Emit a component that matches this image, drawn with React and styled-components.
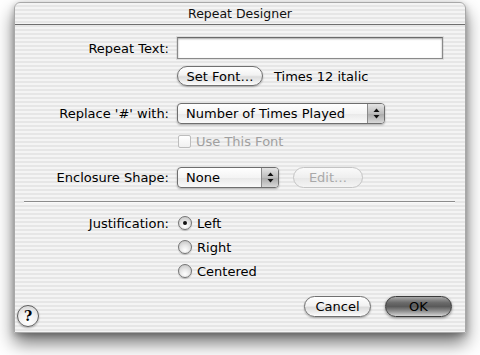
import styled, { createGlobalStyle } from "styled-components";

const GlobalStyle = createGlobalStyle`
    html, body {
        margin: 0;
        padding: 0;
        background: #ffffff;
    }
    body {
        font-family: "DejaVu Sans", "Liberation Sans", sans-serif;
        font-size: 13px;
        color: #000;
    }
`;

const pinstripe = `repeating-linear-gradient(to bottom, #f4f4f4 0px, #f4f4f4 2px, #e6e6e6 2px, #e6e6e6 4px)`;

const Page = styled.div`
    width: 480px;
    height: 355px;
    padding: 2px 0 0 14px;
    box-sizing: border-box;
    overflow: hidden;
`;

const Window = styled.div`
    width: 452px;
    height: 331px;
    box-sizing: border-box;
    display: flex;
    flex-direction: column;
    background: ${pinstripe};
    border: 1px solid #a8a8a8;
    border-radius: 6px 6px 0 0;
    box-shadow: 0 10px 18px rgba(0, 0, 0, 0.55), 0 2px 6px rgba(0, 0, 0, 0.25);
`;

const TitleBar = styled.div`
    height: 21px;
    flex: none;
    display: flex;
    align-items: center;
    justify-content: center;
    border-bottom: 1px solid #6e6e6e;
    font-size: 12.5px;
    color: #111;
`;

const Content = styled.div`
    flex: 1;
    display: flex;
    flex-direction: column;
`;

const Row = styled.div`
    display: grid;
    grid-template-columns: 154px 1fr;
    column-gap: 8px;
    align-items: center;
    height: ${(p) => p.h}px;
    margin-top: ${(p) => p.mt}px;
`;

const Label = styled.span`
    text-align: right;
    white-space: nowrap;
`;

const Controls = styled.div`
    display: flex;
    align-items: center;
    gap: ${(p) => p.gap || 0}px;
`;

const TextField = styled.div`
    width: 266px;
    height: 22px;
    box-sizing: border-box;
    background: #fff;
    border: 1px solid #8a8a8a;
    border-top-color: #6a6a6a;
    box-shadow: inset 0 1px 2px rgba(0, 0, 0, 0.35), 0 0 0 1px rgba(0, 0, 0, 0.08);
`;

const PushButton = styled.button`
    height: ${(p) => p.h || 20}px;
    width: ${(p) => p.w}px;
    box-sizing: border-box;
    padding: 0;
    border-radius: 11px;
    font-family: inherit;
    font-size: 13px;
    color: ${(p) => (p.disabled ? "#a9a9a9" : "#000")};
    border: 1px solid ${(p) => (p.disabled ? "#c4c4c4" : "#707070")};
    background: ${(p) =>
        p.disabled
            ? "linear-gradient(to bottom, #fafafa, #efefef 50%, #e6e6e6 51%, #f4f4f4)"
            : "linear-gradient(to bottom, #ffffff, #f2f2f2 45%, #dcdcdc 55%, #f4f4f4 90%, #ffffff)"};
    box-shadow: ${(p) => (p.disabled ? "none" : "0 1px 2px rgba(0,0,0,0.3)")};
`;

const DefaultButton = styled(PushButton)`
    border-color: #3a3a3a;
    background: linear-gradient(to bottom, #a8a8a8 0%, #6a6a6a 30%, #5a5a5a 50%, #8a8a8a 72%, #d4d4d4 100%);
    color: #000;
    box-shadow: 0 1px 3px rgba(0, 0, 0, 0.45);
`;

const InfoText = styled.span`
    margin-left: 11px;
`;

const Popup = styled.div`
    width: ${(p) => p.w}px;
    height: 21px;
    box-sizing: border-box;
    display: flex;
    border: 1px solid #6e6e6e;
    border-radius: 4px;
    overflow: hidden;
    box-shadow: 0 1px 2px rgba(0, 0, 0, 0.3);
    background: linear-gradient(to bottom, #ffffff, #f4f4f4 50%, #e8e8e8 51%, #fafafa);
`;

const PopupLabel = styled.span`
    flex: 1;
    padding-left: 8px;
    display: flex;
    align-items: center;
    white-space: nowrap;
`;

const PopupArrows = styled.span`
    width: 16px;
    border-left: 1px solid #8a8a8a;
    display: flex;
    align-items: center;
    justify-content: center;
    background: linear-gradient(to bottom, #e4e4e4, #bdbdbd 50%, #a9a9a9 51%, #d8d8d8);
`;

const CheckRow = styled.div`
    display: flex;
    align-items: center;
    gap: 5px;
    color: ${(p) => (p.disabled ? "#a0a0a0" : "#000")};
`;

const CheckBox = styled.span`
    width: 13px;
    height: 13px;
    margin-left: 1px;
    box-sizing: border-box;
    border: 1px solid #bdbdbd;
    border-radius: 2px;
    background: linear-gradient(to bottom, #ffffff, #f0f0f0);
`;

const Radio = styled.span`
    width: 14px;
    height: 14px;
    margin-left: 1px;
    box-sizing: border-box;
    border-radius: 50%;
    border: 1px solid #747474;
    display: flex;
    align-items: center;
    justify-content: center;
    background: radial-gradient(circle at 50% 75%, #ffffff 0%, #e6e6e6 45%, #bdbdbd 100%);
    box-shadow: 0 1px 1px rgba(0, 0, 0, 0.2);

    &::after {
        content: "";
        width: 4px;
        height: 4px;
        border-radius: 50%;
        background: #111;
        display: ${(p) => (p.checked ? "block" : "none")};
    }
`;

const Separator = styled.div`
    height: 1px;
    background: #8c8c8c;
    margin: 13px 10px 0 9px;
    box-shadow: 0 1px 0 #fafafa;
`;

const Footer = styled.div`
    margin-top: 13px;
    display: flex;
    align-items: flex-start;
    padding: 0 13px 0 2px;
`;

const HelpButton = styled.span`
    width: 22px;
    height: 22px;
    margin-top: 9px;
    box-sizing: border-box;
    border-radius: 50%;
    border: 1px solid #5e5e5e;
    display: flex;
    align-items: center;
    justify-content: center;
    font-family: "DejaVu Serif", "Liberation Serif", serif;
    font-weight: bold;
    font-size: 14px;
    background: radial-gradient(circle at 50% 80%, #ffffff 0%, #f0f0f0 50%, #cfcfcf 100%);
    box-shadow: 0 1px 2px rgba(0, 0, 0, 0.3);
`;

const ButtonGroup = styled.div`
    margin-left: auto;
    display: flex;
    gap: 14px;
`;

const Arrows = () => (
    <svg width="7" height="11" viewBox="0 0 7 11">
        <path d="M3.5 0.5 L6.5 4 H0.5 Z" fill="#111" />
        <path d="M3.5 10.5 L6.5 7 H0.5 Z" fill="#111" />
    </svg>
);

const radios = [
    { label: "Left", checked: true },
    { label: "Right", checked: false },
    { label: "Centered", checked: false },
];

export default function App() {
    return (
        <Page>
            <GlobalStyle />
            <Window>
                <TitleBar>Repeat Designer</TitleBar>
                <Content>
                    <Row h={22} mt={12}>
                        <Label>Repeat Text:</Label>
                        <TextField />
                    </Row>
                    <Row h={20} mt={7}>
                        <span />
                        <Controls>
                            <PushButton w={86}>Set Font…</PushButton>
                            <InfoText>Times 12 italic</InfoText>
                        </Controls>
                    </Row>
                    <Row h={21} mt={17}>
                        <Label>Replace '#' with:</Label>
                        <Popup w={208}>
                            <PopupLabel>Number of Times Played</PopupLabel>
                            <PopupArrows><Arrows /></PopupArrows>
                        </Popup>
                    </Row>
                    <Row h={18} mt={8}>
                        <span />
                        <CheckRow disabled>
                            <CheckBox />
                            Use This Font
                        </CheckRow>
                    </Row>
                    <Row h={21} mt={17}>
                        <Label>Enclosure Shape:</Label>
                        <Controls gap={14}>
                            <Popup w={102}>
                                <PopupLabel>None</PopupLabel>
                                <PopupArrows><Arrows /></PopupArrows>
                            </Popup>
                            <PushButton w={70} h={21} disabled>Edit…</PushButton>
                        </Controls>
                    </Row>
                    <Separator />
                    {radios.map((r, i) => (
                        <Row h={24} mt={i === 0 ? 9 : 0} key={r.label}>
                            <Label>{i === 0 ? "Justification:" : ""}</Label>
                            <CheckRow>
                                <Radio checked={r.checked} />
                                {r.label}
                            </CheckRow>
                        </Row>
                    ))}
                    <Footer>
                        <HelpButton>?</HelpButton>
                        <ButtonGroup>
                            <PushButton w={67} h={21}>Cancel</PushButton>
                            <DefaultButton w={67} h={21}>OK</DefaultButton>
                        </ButtonGroup>
                    </Footer>
                </Content>
            </Window>
        </Page>
    );
}
